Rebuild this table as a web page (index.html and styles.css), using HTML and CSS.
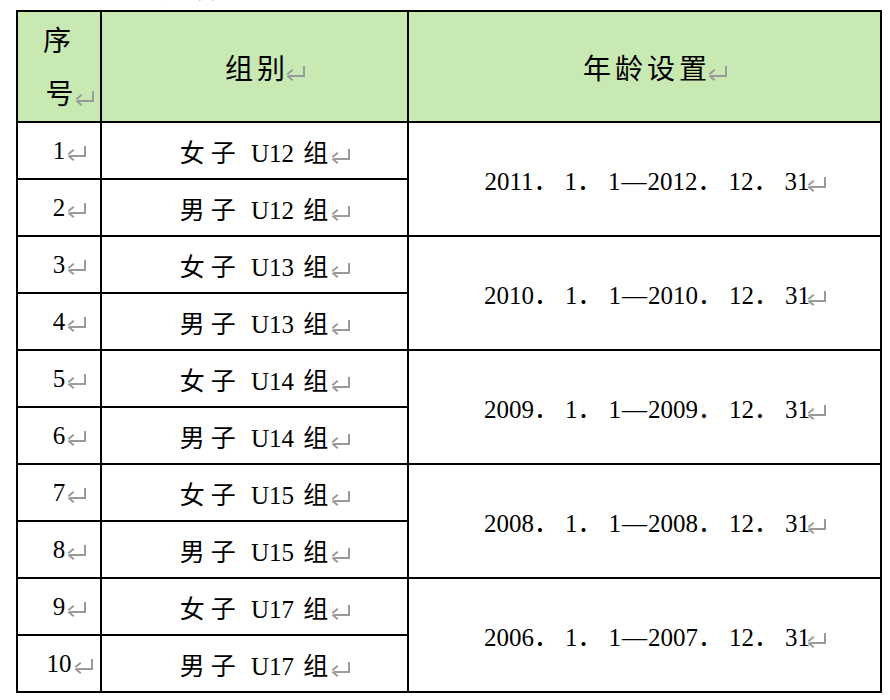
FILE: index.html
```html
<!DOCTYPE html>
<html lang="zh-CN">
<head>
<meta charset="utf-8">
<title>组别与年龄设置</title>
<link rel="stylesheet" href="styles.css">
</head>
<body>
<div class="page">
  <p class="caption"><span class="cj">组别设置</span></p>
  <table class="grid">
    <colgroup>
      <col class="col-no">
      <col class="col-group">
      <col class="col-age">
    </colgroup>
    <thead>
      <tr>
        <th class="no-head"><span class="line cj">序</span><span class="line"><span class="cj">号</span><i class="pm"></i></span></th>
        <th><span class="cj">组别</span><i class="pm"></i></th>
        <th><span class="cj">年龄设置</span><i class="pm"></i></th>
      </tr>
    </thead>
    <tbody>
      <tr><td>1<i class="pm"></i></td><td><span class="cj">女子</span> U12 <span class="cj">组</span><i class="pm"></i></td><td rowspan="2" class="date">2011<span class="cj">．</span>1<span class="cj">．</span>1<span class="dash">—</span>2012<span class="cj">．</span>12<span class="cj">．</span>31<i class="pm"></i></td></tr>
      <tr><td>2<i class="pm"></i></td><td><span class="cj">男子</span> U12 <span class="cj">组</span><i class="pm"></i></td></tr>
      <tr><td>3<i class="pm"></i></td><td><span class="cj">女子</span> U13 <span class="cj">组</span><i class="pm"></i></td><td rowspan="2" class="date">2010<span class="cj">．</span>1<span class="cj">．</span>1<span class="dash">—</span>2010<span class="cj">．</span>12<span class="cj">．</span>31<i class="pm"></i></td></tr>
      <tr><td>4<i class="pm"></i></td><td><span class="cj">男子</span> U13 <span class="cj">组</span><i class="pm"></i></td></tr>
      <tr><td>5<i class="pm"></i></td><td><span class="cj">女子</span> U14 <span class="cj">组</span><i class="pm"></i></td><td rowspan="2" class="date">2009<span class="cj">．</span>1<span class="cj">．</span>1<span class="dash">—</span>2009<span class="cj">．</span>12<span class="cj">．</span>31<i class="pm"></i></td></tr>
      <tr><td>6<i class="pm"></i></td><td><span class="cj">男子</span> U14 <span class="cj">组</span><i class="pm"></i></td></tr>
      <tr><td>7<i class="pm"></i></td><td><span class="cj">女子</span> U15 <span class="cj">组</span><i class="pm"></i></td><td rowspan="2" class="date">2008<span class="cj">．</span>1<span class="cj">．</span>1<span class="dash">—</span>2008<span class="cj">．</span>12<span class="cj">．</span>31<i class="pm"></i></td></tr>
      <tr><td>8<i class="pm"></i></td><td><span class="cj">男子</span> U15 <span class="cj">组</span><i class="pm"></i></td></tr>
      <tr><td>9<i class="pm"></i></td><td><span class="cj">女子</span> U17 <span class="cj">组</span><i class="pm"></i></td><td rowspan="2" class="date">2006<span class="cj">．</span>1<span class="cj">．</span>1<span class="dash">—</span>2007<span class="cj">．</span>12<span class="cj">．</span>31<i class="pm"></i></td></tr>
      <tr><td>10<i class="pm"></i></td><td><span class="cj">男子</span> U17 <span class="cj">组</span><i class="pm"></i></td></tr>
    </tbody>
  </table>
</div>
</body>
</html>
```

FILE: styles.css
```css
html, body {
  margin: 0;
  padding: 0;
  background: #ffffff;
}

.page {
  padding: 0 0 0 16px;
  font-family: "Liberation Serif", "Noto Sans CJK SC", serif;
  font-size: 25px;
  color: #000000;
}

.caption {
  margin: -28px 0 0 112px;
  height: 38px;
  line-height: 30px;
  font-size: 25px;
  overflow: hidden;
}

.cj {
  font-family: "Noto Sans CJK SC", sans-serif;
  font-weight: 400;
  letter-spacing: 6px;
}

.dash {
  font-family: "Liberation Serif", serif;
  letter-spacing: 0;
  margin: 0 1px;
}

.grid {
  border-collapse: collapse;
  width: 864px;
  table-layout: fixed;
}

.col-no { width: 84px; }
.col-group { width: 307px; }
.col-age { width: 473px; }

.grid th,
.grid td {
  border: 2px solid #000000;
  padding: 0;
  text-align: center;
  vertical-align: middle;
  font-weight: 400;
  white-space: nowrap;
  word-spacing: 3px;
}

.grid td.date {
  word-spacing: 0;
}

.grid th {
  background: #c9e9b3;
  height: 109px;
  font-size: 28px;
}

.grid th .cj {
  letter-spacing: 4px;
}

.grid td {
  height: 57px;
  box-sizing: border-box;
}

.no-head .line {
  display: block;
  line-height: 53px;
}

.pm {
  display: inline-block;
  width: 20px;
  height: 14px;
  margin-right: -22px;
  margin-left: 2px;
  vertical-align: -1px;
  background:
    linear-gradient(#9a9a9a, #9a9a9a) 17px 0 / 2px 10px no-repeat,
    linear-gradient(#9a9a9a, #9a9a9a) 3px 9px / 16px 2px no-repeat;
  position: relative;
}

.cj + .pm {
  margin-left: -3px;
}

.pm::before,
.pm::after {
  content: "";
  position: absolute;
  left: 2px;
  width: 7px;
  height: 2px;
  background: #9a9a9a;
}

.pm::before {
  top: 7px;
  transform: rotate(-40deg);
  transform-origin: 0 100%;
}

.pm::after {
  top: 9px;
  transform: rotate(40deg);
  transform-origin: 0 0;
}
```
